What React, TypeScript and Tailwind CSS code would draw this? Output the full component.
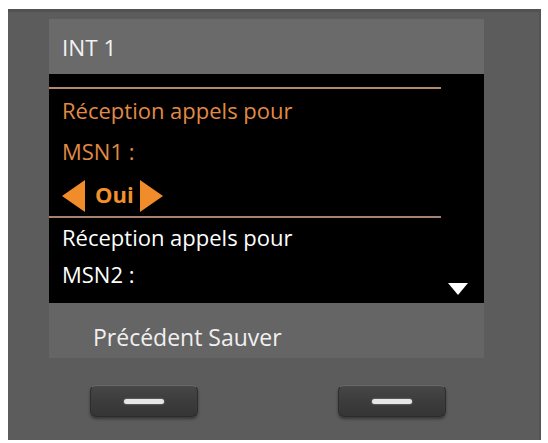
import React from "react";

function ArrowLeft() {
  return (
    <svg width="23" height="32" viewBox="0 0 23 32">
      <polygon points="23,0 23,32 0,16" fill="#f08c2a" />
    </svg>
  );
}
function ArrowRight() {
  return (
    <svg width="23" height="32" viewBox="0 0 23 32">
      <polygon points="0,0 0,32 23,16" fill="#f08c2a" />
    </svg>
  );
}

function Key() {
  return (
    <div className="w-[108px] h-[32px] rounded-[6px] bg-gradient-to-b from-[#474747] via-[#3c3c3c] to-[#353535] border border-[#2c2c2c] border-t-[#6a6a6a] shadow-[0_2px_3px_rgba(0,0,0,0.4)] flex items-center justify-center">
      <div className="w-[40px] h-[5px] rounded-full bg-[#e6e6e6] shadow-[0_0_2px_rgba(255,255,255,0.5)]" />
    </div>
  );
}

export default function App() {
  const font = { fontFamily: '"Open Sans", "Noto Sans", sans-serif' };
  return (
    <div className="w-[548px] h-[443px] bg-white pt-[9px] pl-[8px]" style={font}>
      <div className="w-[533px] h-[431px] bg-[#5c5c5c] border-t-[3px] border-t-[#525252] border-r-[2px] border-r-[#545454] flex flex-col pl-[41px] pt-[7px]">
        <div className="w-[435px] flex flex-col">
          <div className="h-[55px] bg-[#6a6a6a] flex items-center pl-[13px] pt-[3px] text-[22.5px] leading-[22px] text-[#f2f2f2]">
            INT 1
          </div>
          <div className="h-[229px] bg-black flex flex-col">
            <div className="mt-[13px] h-[2px] w-[392px] bg-[#b8866a]" />
            <div className="h-[41px] flex items-center pl-[13px] text-[22px] leading-[22px] text-[#e08a45]">
              Réception appels pour
            </div>
            <div className="h-[42px] flex items-center pl-[13px] text-[22px] leading-[22px] text-[#e08a45]">
              MSN1 :
            </div>
            <div className="h-[44px] flex items-end pb-[4px] pl-[13px]">
              <ArrowLeft />
              <span className="ml-[10px] mr-[6px] self-center mt-[4px] text-[22px] leading-[22px] font-bold text-[#f0902e]">
                Oui
              </span>
              <ArrowRight />
            </div>
            <div className="h-[2px] w-[392px] bg-[#a88270]" />
            <div className="h-[38px] flex items-center pl-[13px] text-[22px] leading-[22px] text-white">
              Réception appels pour
            </div>
            <div className="flex-1 flex">
              <div className="h-[36px] flex items-center pl-[13px] text-[22px] leading-[22px] text-white">
                MSN2 :
              </div>
              <svg className="ml-auto self-end mb-[8px] mr-[16px]" width="20" height="12" viewBox="0 0 20 12">
                <polygon points="0,0 20,0 10,12" fill="#ffffff" />
              </svg>
            </div>
          </div>
          <div className="h-[55px] bg-[#656565] pt-[23px] pl-[44px] text-[23px] leading-[22px] text-[#f0f0f0]">
            Précédent Sauver
          </div>
        </div>
        <div className="mt-[27px] ml-[41px] flex gap-[140px]">
          <Key />
          <Key />
        </div>
      </div>
    </div>
  );
}
